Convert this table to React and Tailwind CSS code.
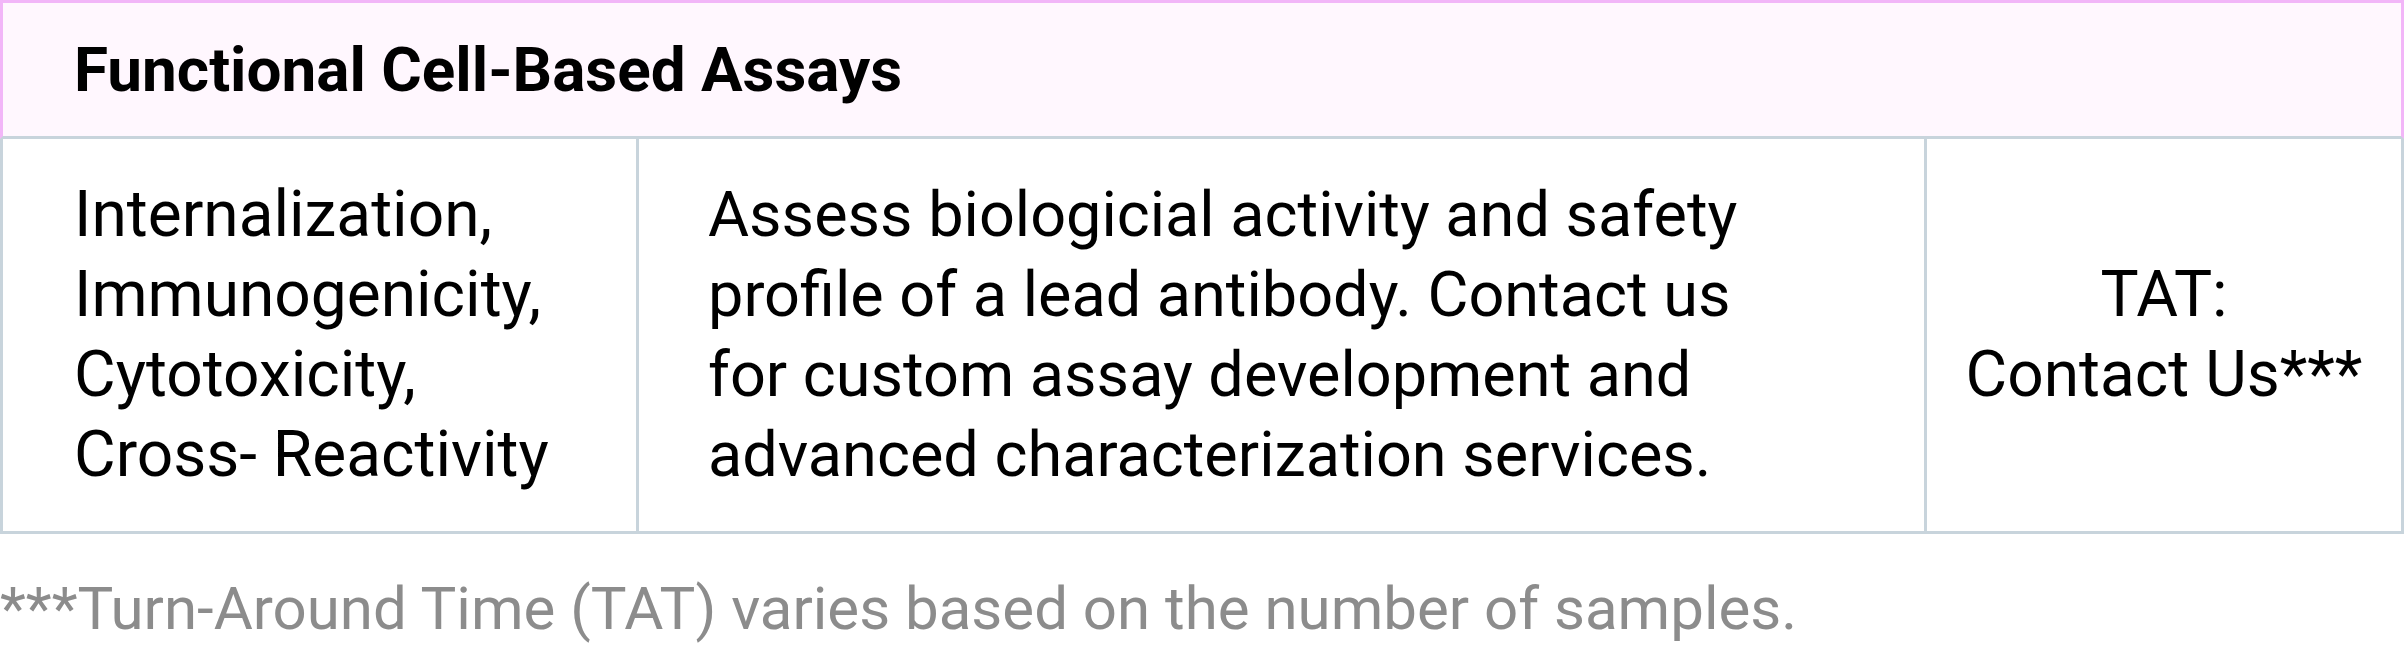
import React from "react";

export default function App() {
  return (
    <div className="w-[2404px] bg-white text-black" style={{ fontFamily: "Roboto, 'Liberation Sans', sans-serif" }}>
      <div className="h-[139px] flex items-center bg-[#fff7fe] border-t-[3px] border-x-[3px] border-b-[3px] border-[#f2b6f8] border-b-[#c8d4dc] pl-[71px]">
        <span className="text-[62px] font-bold leading-[80px] whitespace-nowrap">Functional Cell-Based Assays</span>
      </div>
      <div className="flex h-[395px] border-x-[3px] border-b-[3px] border-[#c8d4dc]">
        <div className="w-[633px] flex items-center pl-[71px] text-[64px] leading-[80px]">
          <p className="whitespace-nowrap">Internalization,<br />Immunogenicity,<br />Cytotoxicity,<br />Cross- Reactivity</p>
        </div>
        <div className="w-[1288px] border-l-[3px] border-[#c8d4dc] flex items-center pl-[69px] text-[63px] leading-[80px]">
          <p className="whitespace-nowrap">Assess biologicial activity and safety<br />profile of a lead antibody. Contact us<br />for custom assay development and<br />advanced characterization services.</p>
        </div>
        <div className="flex-1 border-l-[3px] border-[#c8d4dc] flex items-center justify-center text-center text-[64px] leading-[80px]">
          <p className="whitespace-nowrap">TAT:<br />Contact Us***</p>
        </div>
      </div>
      <p className="mt-[35px] text-[60px] leading-[80px] text-[#8c8c8c] whitespace-nowrap">***Turn-Around Time (TAT) varies based on the number of samples.</p>
    </div>
  );
}
